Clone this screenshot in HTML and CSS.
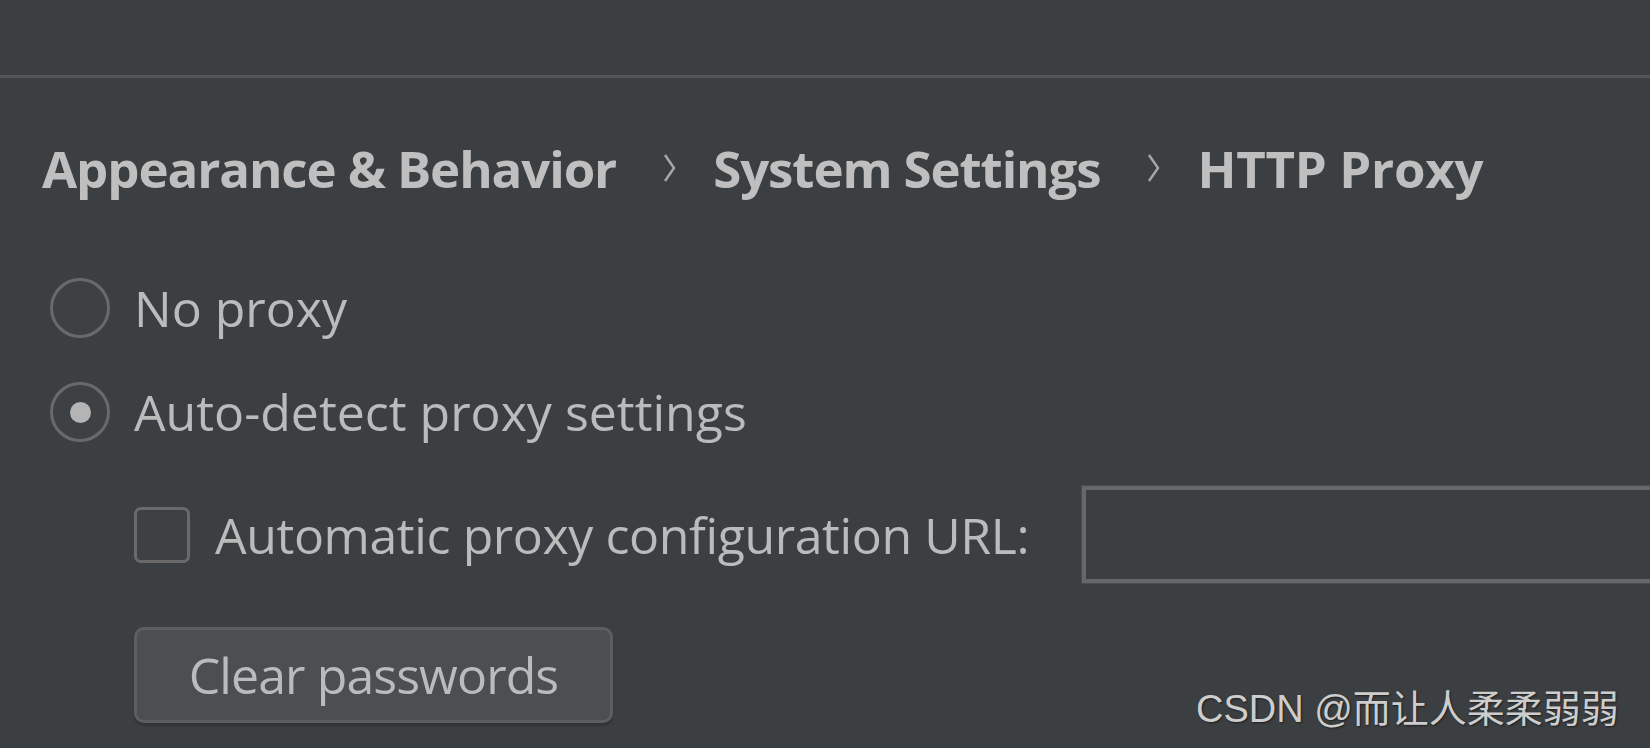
FILE: index.html
```html
<!DOCTYPE html>
<html lang="en">
<head>
<meta charset="utf-8">
<title>HTTP Proxy</title>
<link rel="stylesheet" href="styles.css">
</head>
<body>
<div class="page">
  <div class="topbar"></div>
  <nav class="breadcrumb">
    <span class="crumb">Appearance &amp; Behavior</span>
    <svg class="chev chev-1" width="14" height="30" viewBox="0 0 14 30"><polyline points="2,2 11,15 2,28" fill="none" stroke="#a8a8a8" stroke-width="2.4"/></svg>
    <span class="crumb">System Settings</span>
    <svg class="chev chev-2" width="14" height="30" viewBox="0 0 14 30"><polyline points="2,2 11,15 2,28" fill="none" stroke="#a8a8a8" stroke-width="2.4"/></svg>
    <span class="crumb crumb-last">HTTP Proxy</span>
  </nav>
  <div class="options">
    <div class="radio-row">
      <span class="radio"></span>
      <span class="label">No proxy</span>
    </div>
    <div class="radio-row">
      <span class="radio checked"><span class="dot"></span></span>
      <span class="label">Auto-detect proxy settings</span>
    </div>
    <div class="check-row">
      <span class="checkbox"></span>
      <span class="label">Automatic proxy configuration URL:</span>
      <span class="field"></span>
    </div>
    <div class="button-row">
      <button class="btn">Clear passwords</button>
    </div>
  </div>
  <div class="watermark">CSDN @而让人柔柔弱弱</div>
</div>
</body>
</html>
```
FILE: styles.css
```css
html, body {
  margin: 0;
  padding: 0;
  background: #3c3f41;
}
body {
  width: 1650px;
  height: 748px;
  overflow: hidden;
  font-family: "Open Sans", "Noto Sans", sans-serif;
  color: #bbbbbb;
}
.page {
  position: relative;
  width: 1650px;
  height: 748px;
  overflow: hidden;
}
.topbar {
  height: 75px;
  border-bottom: 3px solid #535658;
}
.breadcrumb {
  display: flex;
  align-items: center;
  height: 60px;
  margin-top: 60px;
  padding-left: 42px;
  font-weight: 700;
  font-size: 51px;
  letter-spacing: -1.1px;
  color: #bfbfbf;
  white-space: nowrap;
}
.crumb-last {
  letter-spacing: -0.3px;
}
.chev {
  flex: none;
}
.chev-1,
.chev-2 {
  margin: 0 36px 0 47px;
}
.options {
  display: flex;
  flex-direction: column;
  gap: 44px;
  margin-top: 80px;
}
.radio-row {
  display: flex;
  align-items: center;
  height: 60px;
  padding-left: 50px;
}
.radio {
  box-sizing: border-box;
  width: 60px;
  height: 60px;
  border: 3px solid #6a6a6a;
  border-radius: 50%;
  background: #3e4143;
  display: flex;
  align-items: center;
  justify-content: center;
  flex: none;
}
.dot {
  width: 21px;
  height: 21px;
  border-radius: 50%;
  background: #b4b4b4;
}
.label {
  font-size: 50px;
  color: #bbbbbb;
  white-space: nowrap;
  margin-left: 24px;
}
.check-row {
  display: flex;
  align-items: center;
  height: 97px;
  padding-left: 134px;
}
.checkbox {
  box-sizing: border-box;
  width: 56px;
  height: 56px;
  border: 3px solid #6a6a6a;
  border-radius: 7px;
  background: #3e4143;
  flex: none;
}
.check-row .label {
  margin-left: 25px;
  letter-spacing: -0.4px;
}
.field {
  box-sizing: border-box;
  flex: none;
  width: 700px;
  height: 97px;
  margin-left: 53px;
  border: 4px solid #676767;
  box-shadow: 0 0 0 1px #4a4d4f;
  background: #3c3f41;
}
.button-row {
  padding-left: 134px;
}
.btn {
  box-sizing: border-box;
  width: 479px;
  height: 96px;
  border: 3px solid #5c5f61;
  border-radius: 10px;
  background: #4b4f51;
  box-shadow: 0 3px 2px #323436;
  color: #bbbbbb;
  font-family: "Open Sans", "Noto Sans", sans-serif;
  font-size: 50px;
  letter-spacing: -0.9px;
  padding: 0;
}
.watermark {
  position: absolute;
  left: 1196px;
  top: 678px;
  font-family: "Liberation Sans", "Noto Sans CJK SC", sans-serif;
  font-size: 38px;
  color: #cdcdcd;
  text-shadow: 1px 1px 2px #1e1e1e;
  white-space: nowrap;
}
```
